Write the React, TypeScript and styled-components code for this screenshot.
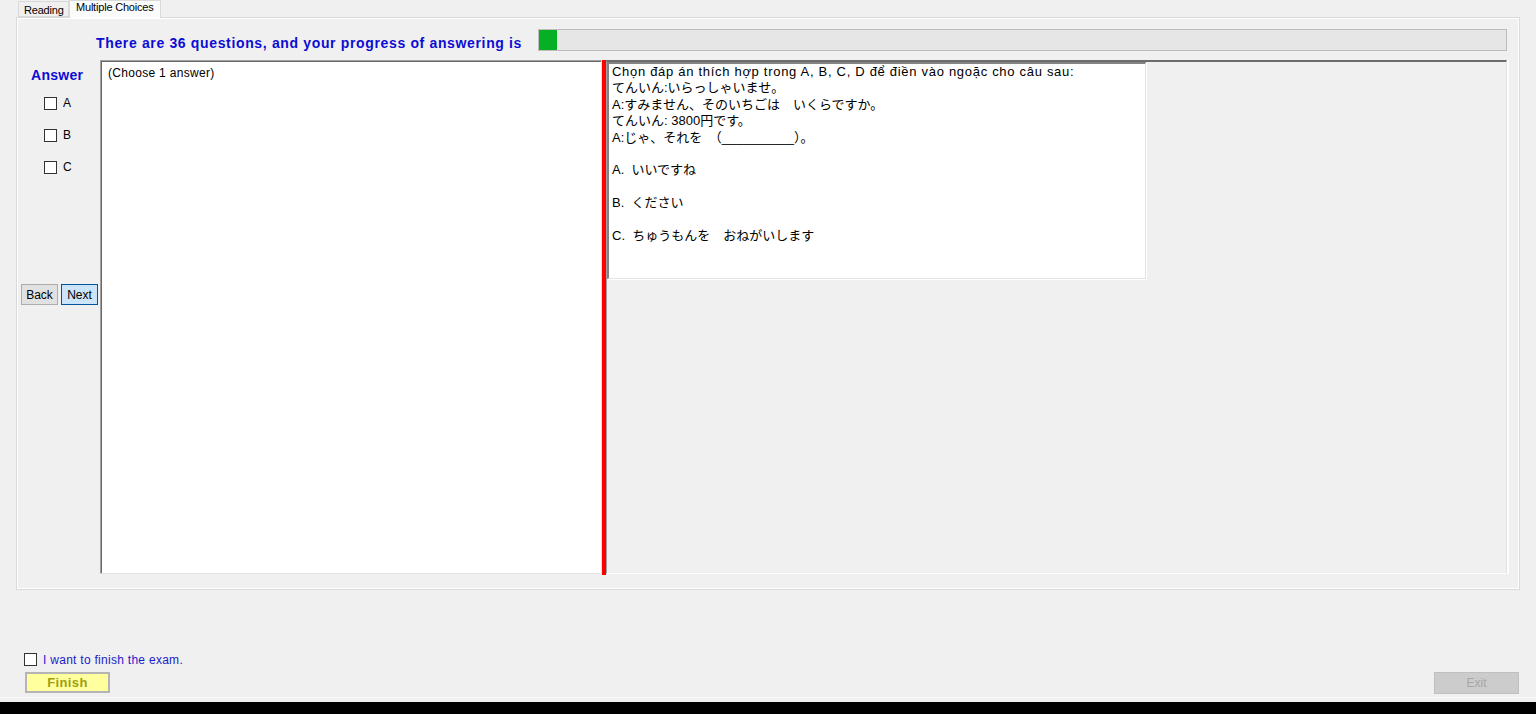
import styled, { createGlobalStyle } from "styled-components";

const GlobalStyle = createGlobalStyle`
  html, body {
    margin: 0;
    padding: 0;
    background: #f0f0f0;
  }
  body {
    font-family: "Liberation Sans", Arial, sans-serif;
    font-size: 12px;
    color: #000;
  }
`;

const Page = styled.div`
  height: 714px;
  display: flex;
  flex-direction: column;
  overflow: hidden;
`;

const TabStrip = styled.div`
  display: flex;
  align-items: flex-end;
  height: 17px;
  padding-left: 18px;
  position: relative;
  z-index: 1;
`;

const Tab = styled.div<{ $active?: boolean; $w: number }>`
  box-sizing: border-box;
  width: ${(p) => p.$w}px;
  height: ${(p) => (p.$active ? 18 : 16)}px;
  margin-bottom: ${(p) => (p.$active ? -1 : 0)}px;
  padding-left: ${(p) => (p.$active ? 6 : 5)}px;
  padding-top: ${(p) => (p.$active ? 0 : 2)}px;
  background: ${(p) => (p.$active ? "#fbfbfb" : "#f0f0f0")};
  border: 1px solid #d9d9d9;
  border-bottom: ${(p) => (p.$active ? "none" : "1px solid #d9d9d9")};
  font-size: 11px;
  line-height: 13px;
  white-space: nowrap;
  letter-spacing: -0.2px;
`;

const TabPage = styled.div`
  box-sizing: border-box;
  margin-left: 16px;
  width: 1504px;
  height: 573px;
  border: 1px solid #d9d9d9;
  box-shadow: inset 1px 1px 0 #ffffff, inset -1px -1px 0 #ffffff;
  padding: 11px 12px 0 0;
  display: flex;
  flex-direction: column;
`;

const Header = styled.div`
  display: flex;
  justify-content: space-between;
  align-items: flex-start;
  height: 22px;
  padding-left: 79px;
`;

const Title = styled.div`
  padding-top: 7px;
  font-size: 14px;
  line-height: 15px;
  font-weight: bold;
  letter-spacing: 0.65px;
  color: #0c0cd4;
  white-space: nowrap;
`;

const ProgressBar = styled.div`
  box-sizing: border-box;
  width: 969px;
  height: 22px;
  background: #e6e6e6;
  border: 1px solid #bcbcbc;
`;

const ProgressFill = styled.div<{ $w: number }>`
  width: ${(p) => p.$w}px;
  height: 100%;
  background: #06b025;
`;

const MainRow = styled.div`
  display: flex;
  margin-top: 9px;
  height: 515px;
`;

const LeftColumn = styled.div`
  width: 83px;
  display: flex;
  flex-direction: column;
  align-items: flex-start;
`;

const AnswerLabel = styled.div`
  margin: 7px 0 0 14px;
  font-size: 14px;
  line-height: 16px;
  font-weight: bold;
  letter-spacing: 0.3px;
  color: #0c0cd4;
`;

const ChoiceRow = styled.div<{ $first?: boolean }>`
  display: flex;
  align-items: center;
  height: 14px;
  margin: ${(p) => (p.$first ? 13 : 18)}px 0 0 27px;
`;

const CheckBox = styled.div`
  box-sizing: border-box;
  width: 13px;
  height: 13px;
  border: 1px solid #333333;
  background: #ffffff;
`;

const ChoiceLabel = styled.span`
  margin-left: 6px;
  font-size: 12px;
  line-height: 14px;
`;

const NavRow = styled.div`
  display: flex;
  gap: 3px;
  margin: 110px 0 0 4px;
`;

const NavButton = styled.div<{ $focused?: boolean }>`
  box-sizing: border-box;
  width: 37px;
  height: 21px;
  display: flex;
  align-items: center;
  justify-content: center;
  font-size: 12px;
  background: ${(p) => (p.$focused ? "#cce4f7" : "#e1e1e1")};
  border: 1px solid ${(p) => (p.$focused ? "#005499" : "#adadad")};
`;

const QuestionBox = styled.div`
  box-sizing: border-box;
  width: 502px;
  height: 514px;
  background: #ffffff;
  border-top: 1px solid #a0a0a0;
  border-left: 1px solid #a0a0a0;
  border-right: 1px solid #e3e3e3;
  border-bottom: 1px solid #e3e3e3;
  box-shadow: inset 1px 1px 0 #696969;
  padding: 5px 7px;
  font-size: 12px;
  line-height: 14px;
  letter-spacing: 0.3px;
`;

const Splitter = styled.div`
  width: 4px;
  background: #ff0000;
`;

const RightPanel = styled.div`
  box-sizing: border-box;
  flex: 1;
  height: 514px;
  border-top: 2px solid #6d6d6d;
  border-left: 1px solid #a0a0a0;
  border-right: 1px solid #e3e3e3;
  border-bottom: 1px solid #ffffff;
  box-shadow: 2px 0 0 #ffffff;
`;

const RichBox = styled.div`
  box-sizing: border-box;
  width: 539px;
  height: 217px;
  background: #ffffff;
  border-top: 2px solid #828282;
  border-left: 2px solid #828282;
  border-right: 1px solid #e3e3e3;
  border-bottom: 1px solid #e3e3e3;
  box-shadow: 1px 1px 0 #ffffff;
  padding: 0 3px;
  font-family: "Liberation Sans", "Noto Sans CJK JP", sans-serif;
  font-size: 13px;
  line-height: 16.4px;
  white-space: pre;
`;

const RichLine = styled.div<{ $latin?: boolean }>`
  height: 16.4px;
  letter-spacing: ${(p) => (p.$latin ? 0.7 : 0)}px;
`;

const Footer = styled.div`
  display: flex;
  flex-direction: column;
  padding: 62px 17px 0 24px;
`;

const FinishRow = styled.div`
  display: flex;
  align-items: center;
  height: 14px;
`;

const FinishLabel = styled.span`
  margin-left: 6px;
  padding-top: 2px;
  font-size: 12px;
  line-height: 14px;
  letter-spacing: 0.28px;
  color: #1c1cc8;
`;

const ButtonRow = styled.div`
  display: flex;
  justify-content: space-between;
  margin-top: 6px;
  padding-left: 1px;
`;

const FinishButton = styled.div`
  box-sizing: border-box;
  width: 85px;
  height: 21px;
  display: flex;
  align-items: center;
  justify-content: center;
  background: #ffff9e;
  border: 2px solid #b4b4b4;
  font-size: 13px;
  font-weight: bold;
  letter-spacing: 0.4px;
  color: #9e9e10;
`;

const ExitButton = styled.div`
  box-sizing: border-box;
  width: 85px;
  height: 22px;
  display: flex;
  align-items: center;
  justify-content: center;
  background: #cccccc;
  border: 1px solid #bfbfbf;
  font-size: 12px;
  color: #a6a6a6;
`;

const BottomBar = styled.div`
  margin-top: auto;
  height: 12px;
  background: #000000;
  box-shadow: 0 -4px 0 #f0f0f0, 0 -5px 0 #fafafa;
`;

const questionLines = [
  "Chọn đáp án thích hợp trong A, B, C, D để điền vào ngoặc cho câu sau:",
  "てんいん:いらっしゃいませ。",
  "A:すみません、そのいちごは　いくらですか。",
  "てんいん: 3800円です。",
  "A:じゃ、それを　（__________）。",
  "",
  "A.  いいですね",
  "",
  "B.  ください",
  "",
  "C.  ちゅうもんを　おねがいします",
];

export default function App() {
  return (
    <>
      <GlobalStyle />
      <Page>
        <TabStrip>
          <Tab $w={51}>Reading</Tab>
          <Tab $w={92} $active>
            Multiple Choices
          </Tab>
        </TabStrip>
        <TabPage>
          <Header>
            <Title>There are 36 questions, and your progress of answering is</Title>
            <ProgressBar>
              <ProgressFill $w={18} />
            </ProgressBar>
          </Header>
          <MainRow>
            <LeftColumn>
              <AnswerLabel>Answer</AnswerLabel>
              {["A", "B", "C"].map((c, i) => (
                <ChoiceRow key={c} $first={i === 0}>
                  <CheckBox />
                  <ChoiceLabel>{c}</ChoiceLabel>
                </ChoiceRow>
              ))}
              <NavRow>
                <NavButton>Back</NavButton>
                <NavButton $focused>Next</NavButton>
              </NavRow>
            </LeftColumn>
            <QuestionBox>(Choose 1 answer)</QuestionBox>
            <Splitter />
            <RightPanel>
              <RichBox>
                {questionLines.map((line, i) => (
                  <RichLine key={i} $latin={i === 0}>
                    {line}
                  </RichLine>
                ))}
              </RichBox>
            </RightPanel>
          </MainRow>
        </TabPage>
        <Footer>
          <FinishRow>
            <CheckBox />
            <FinishLabel>I want to finish the exam.</FinishLabel>
          </FinishRow>
          <ButtonRow>
            <FinishButton>Finish</FinishButton>
            <ExitButton>Exit</ExitButton>
          </ButtonRow>
        </Footer>
        <BottomBar />
      </Page>
    </>
  );
}
